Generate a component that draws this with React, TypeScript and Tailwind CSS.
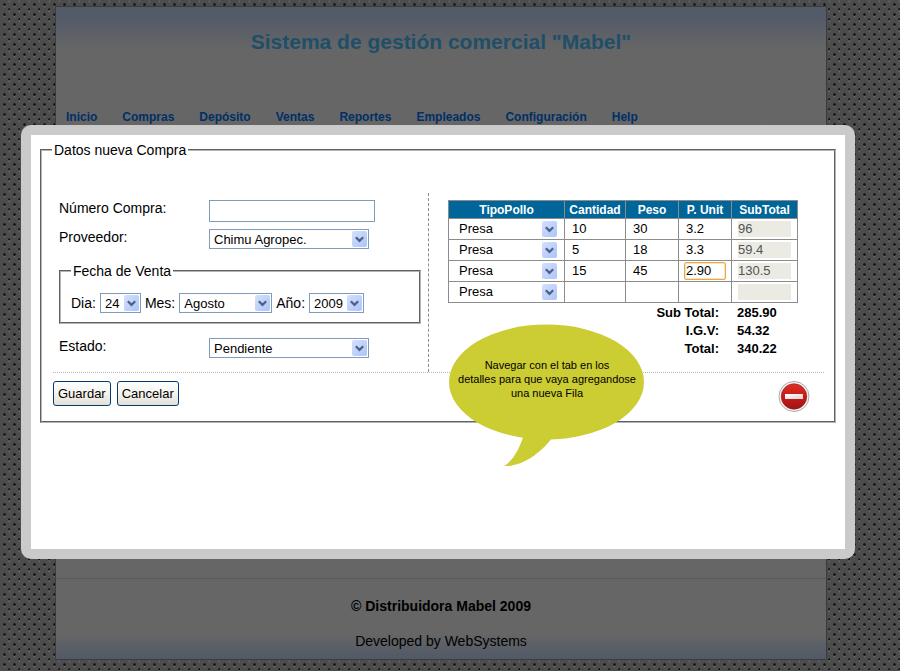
import React from "react";

const navItems = ["Inicio", "Compras", "Depósito", "Ventas", "Reportes", "Empleados", "Configuración", "Help"];

const rows = [
  { cantidad: "10", peso: "30", precio: "3.2", subtotal: "96" },
  { cantidad: "5", peso: "18", precio: "3.3", subtotal: "59.4" },
  { cantidad: "15", peso: "45", precio: "2.90", subtotal: "130.5", active: true },
  { cantidad: "", peso: "", precio: "", subtotal: "" },
];

const totals = [
  ["Sub Total:", "285.90"],
  ["I.G.V:", "54.32"],
  ["Total:", "340.22"],
];

const groove = "min-w-0 border-2 border-[#b4b4b4] [border-style:groove]";

function Select({
  id,
  label,
  value,
  width,
  bare = false,
}: {
  id: string;
  label?: string;
  value: string;
  width: string;
  bare?: boolean;
}) {
  return (
    <span className={`relative block h-5 ${width}`}>
      <select
        id={id}
        aria-label={label}
        defaultValue={value}
        className={`block h-5 w-full appearance-none bg-white pr-4 pl-1 text-[13px] leading-5 text-black outline-none ${
          bare ? "" : "border border-[#7f9db9]"
        }`}
      >
        <option>{value}</option>
      </select>
      <span className="pointer-events-none absolute top-0.5 right-0.5 flex h-4 w-[15px] items-center justify-center rounded-xs bg-linear-to-br from-[#d3e0ff] to-[#adc4f8]">
        <svg width="9" height="7" viewBox="0 0 9 7" fill="none" stroke="#4d6185" strokeWidth="2.2" aria-hidden="true">
          <path d="M0.8 1.2 4.5 4.9 8.2 1.2" />
        </svg>
      </span>
    </span>
  );
}

function CellInput({ label, value, active = false }: { label: string; value: string; active?: boolean }) {
  return (
    <input
      type="text"
      aria-label={label}
      defaultValue={value}
      className={`block h-[18px] w-full text-[13px] text-black outline-none ${
        active ? "rounded-xs border border-[#e9a94a] px-px inset-ring inset-ring-[#fbe3b8]" : "px-0.5"
      }`}
    />
  );
}

function Header() {
  return (
    <header className="flex h-[118px] flex-col justify-between bg-linear-to-b from-[#535a68] from-[10px] to-[#666] to-[42px]">
      <h1 className="pt-[21px] text-center text-[21px] leading-7 font-bold text-[#1f4f68]">
        Sistema de gestión comercial "Mabel"
      </h1>
      <nav className="flex gap-[25px] px-2.5 text-xs leading-4 font-bold text-[#003066]">
        {navItems.map((item) => (
          <a key={item} href="#">
            {item}
          </a>
        ))}
      </nav>
    </header>
  );
}

function Footer() {
  return (
    <footer className="border-t border-[#5a5a5a] bg-linear-to-t from-[#515966] to-[#666] to-[26px] pt-[19px] pb-[9px] text-center text-sm leading-[17px] text-black">
      <p className="pb-[18px] font-bold">© Distribuidora Mabel 2009</p>
      <p>Developed by WebSystems</p>
    </footer>
  );
}

function PurchaseForm() {
  return (
    <div className="flex flex-col gap-[7px] pt-[7px] pb-[14px] pl-1.5 text-sm leading-4">
      <div className="flex items-start">
        <label htmlFor="numero" className="w-[150px]">
          Número Compra:
        </label>
        <input id="numero" type="text" className="h-[22px] w-[166px] border border-[#7f9db9] px-1 text-[13px] outline-none" />
      </div>
      <div className="flex items-start">
        <label htmlFor="proveedor" className="w-[150px]">
          Proveedor:
        </label>
        <Select id="proveedor" value="Chimu Agropec." width="w-40" />
      </div>
      <fieldset className={`my-[7px] mr-[7px] px-2.5 pt-[14px] pb-[9px] ${groove}`}>
        <legend className="px-0.5">Fecha de Venta</legend>
        <div className="flex items-center gap-1">
          <label htmlFor="dia">Dia:</label>
          <Select id="dia" value="24" width="w-[41px]" />
          <label htmlFor="mes">Mes:</label>
          <Select id="mes" value="Agosto" width="w-[93px]" />
          <label htmlFor="anio">Año:</label>
          <Select id="anio" value="2009" width="w-[55px]" />
        </div>
      </fieldset>
      <div className="flex items-start">
        <label htmlFor="estado" className="w-[150px]">
          Estado:
        </label>
        <Select id="estado" value="Pendiente" width="w-40" />
      </div>
    </div>
  );
}

function Bubble() {
  return (
    <div role="note" className="absolute top-[131px] left-5 z-10 h-[143px] w-[196px]">
      <svg width="196" height="143" viewBox="0 0 196 143" fill="#cccc33" className="absolute inset-0" aria-hidden="true">
        <ellipse cx="97.5" cy="58" rx="97.5" ry="57.5" />
        <path d="M75 110C71 124 64 137 55 142C72 143 91 130 103 114Z" />
      </svg>
      <p className="relative pt-[34px] text-center text-[11px] leading-[14px] text-black">
        Navegar con el tab en los
        <br />
        detalles para que vaya agregandose
        <br />
        una nueva Fila
      </p>
    </div>
  );
}

function Details() {
  const cell = "h-[21px] border border-[#8c8c8c] p-0";
  const head = "h-[18px] border border-[#8c8c8c] p-0";
  return (
    <div className="relative min-w-0 flex-1 border-l border-dashed border-[#8c8c8c] pt-[7px] pl-[19px]">
      <table className="w-[350px] table-fixed border-collapse">
        <colgroup>
          <col className="w-[116px]" />
          <col className="w-[61px]" />
          <col className="w-[53px]" />
          <col className="w-[53px]" />
          <col />
        </colgroup>
        <thead>
          <tr className="bg-[#006699] text-xs leading-4 font-bold text-white">
            <th className={head}>TipoPollo</th>
            <th className={head}>Cantidad</th>
            <th className={head}>Peso</th>
            <th className={head}>P. Unit</th>
            <th className={head}>SubTotal</th>
          </tr>
        </thead>
        <tbody>
          {rows.map((row, i) => (
            <tr key={i}>
              <td className={`${cell} pr-[5px] pl-1.5`}>
                <Select id={`tipo-${i}`} label="TipoPollo" value="Presa" width="w-full" bare />
              </td>
              <td className={`${cell} px-[5px]`}>
                <CellInput label="Cantidad" value={row.cantidad} />
              </td>
              <td className={`${cell} px-[5px]`}>
                <CellInput label="Peso" value={row.peso} />
              </td>
              <td className={`${cell} px-[5px]`}>
                <CellInput label="P. Unit" value={row.precio} active={row.active} />
              </td>
              <td className={`${cell} px-1.5`}>
                <input
                  type="text"
                  disabled
                  aria-label="SubTotal"
                  defaultValue={row.subtotal}
                  className="block h-4 w-[53px] bg-[#ebebe4] text-[13px] text-[#545454]"
                />
              </td>
            </tr>
          ))}
        </tbody>
      </table>
      <dl className="grid w-[350px] grid-cols-[1fr_61px] gap-x-[18px] pt-px text-[13px] leading-[18px] font-bold">
        {totals.map(([name, amount]) => (
          <React.Fragment key={name}>
            <dt className="text-right">{name}</dt>
            <dd>{amount}</dd>
          </React.Fragment>
        ))}
      </dl>
      <Bubble />
    </div>
  );
}

function RemoveIcon() {
  return (
    <svg width="32" height="32" viewBox="0 0 32 32" aria-hidden="true">
      <defs>
        <linearGradient id="red" x1="0" y1="0" x2="0" y2="1">
          <stop offset="0" stopColor="#dc3026" />
          <stop offset="0.5" stopColor="#c81a1a" />
          <stop offset="1" stopColor="#a01412" />
        </linearGradient>
        <linearGradient id="bar" x1="0" y1="0" x2="1" y2="1">
          <stop offset="0" stopColor="#ffffff" />
          <stop offset="1" stopColor="#d8d4d0" />
        </linearGradient>
      </defs>
      <circle cx="16" cy="15.5" r="15" fill="#fafafa" stroke="#a8a8a8" />
      <circle cx="16" cy="15.5" r="12.8" fill="url(#red)" stroke="#8e1a18" strokeWidth="0.6" />
      <rect x="7" y="13" width="18" height="5" fill="url(#bar)" />
    </svg>
  );
}

function Actions() {
  const button =
    "h-[25px] rounded-[3px] border border-[#003c74] bg-linear-to-b from-white via-[#f4f3ee] to-[#e4e0d6] px-1 text-[13px] text-black";
  return (
    <div className="flex items-start justify-between border-t border-dotted border-[#b8b8b8] pt-2 pr-3.5 pb-2">
      <div className="flex gap-1.5">
        <button type="button" className={button}>
          Guardar
        </button>
        <button type="button" className={button}>
          Cancelar
        </button>
      </div>
      <button type="button" aria-label="Eliminar fila">
        <RemoveIcon />
      </button>
    </div>
  );
}

export default function App() {
  return (
    <div className="relative flex min-h-screen flex-col bg-[#4c4c4c] bg-[radial-gradient(circle_at_4.5px_4.5px,#101010_0.8px,transparent_1.7px),radial-gradient(circle_at_9.5px_9.5px,#101010_0.8px,transparent_1.7px),radial-gradient(circle_at_4.5px_6.5px,#646464_0.5px,transparent_1.5px),radial-gradient(circle_at_9.5px_1.5px,#646464_0.5px,transparent_1.5px)] bg-size-[10px_10px] pt-[6px] pr-[18px] pb-[11px] font-['Liberation_Sans',Arial,sans-serif]">
      <div className="mx-auto flex w-full max-w-[772px] flex-1 flex-col border border-[#3c3c3c] bg-[#666]">
        <Header />
        <main className="min-h-[453px] flex-1" />
        <Footer />
      </div>

      <div
        role="dialog"
        aria-label="Datos nueva Compra"
        className="absolute top-[125px] right-[45px] left-[21px] min-h-[434px] rounded-[10px] border-10 border-[#cacaca] bg-[#cacaca] text-black"
      >
        <form className="min-h-[414px] bg-white px-[9px] pt-[7px]">
          <fieldset className={`pt-[35px] pr-2.5 pl-[11px] ${groove}`}>
            <legend className="-ml-px px-0.5 text-sm leading-4">Datos nueva Compra</legend>
            <div className="flex">
              <div className="w-[375px] shrink-0">
                <PurchaseForm />
              </div>
              <Details />
            </div>
            <Actions />
          </fieldset>
        </form>
      </div>
    </div>
  );
}
